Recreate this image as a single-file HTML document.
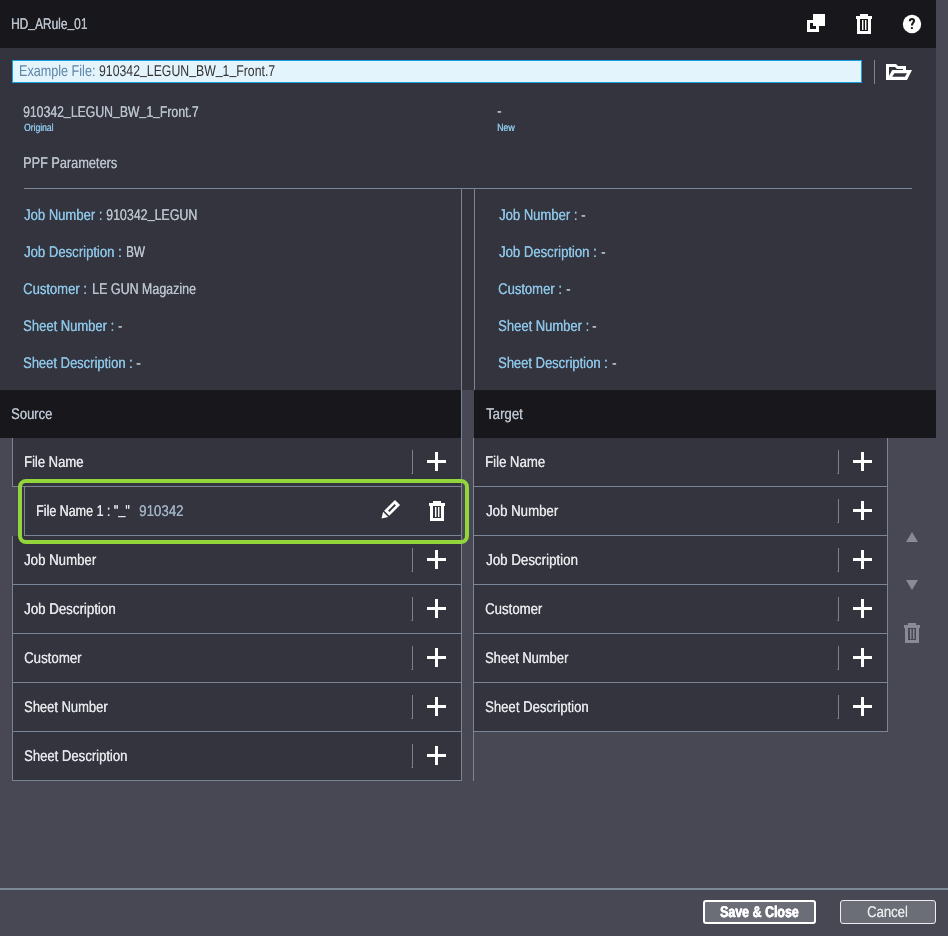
<!DOCTYPE html>
<html><head><meta charset="utf-8">
<style>
*{box-sizing:border-box;margin:0;padding:0}
html,body{width:948px;height:936px;overflow:hidden;background:#474853;font-family:"Liberation Sans",sans-serif}
.a{position:absolute}
.t{position:absolute;white-space:pre;font-size:15.5px;line-height:15px;transform-origin:0 0;text-rendering:geometricPrecision;backface-visibility:hidden;text-shadow:0.3px 0 0 currentColor}
.us{position:relative;top:-2px}
.ln{position:absolute;background:#7a8494}
.sep{position:absolute;width:1px;height:24px;background:#778190}
.sep:after{content:"";position:absolute;left:-1px;bottom:0;width:1px;height:1px;background:#5a6270}
.plus{position:absolute;width:19px;height:19px}
.plus:before{content:"";position:absolute;left:0;top:8px;width:19px;height:3px;background:#fff}
.plus:after{content:"";position:absolute;left:8px;top:0;width:3px;height:19px;background:#fff}
.rowbg{position:absolute;background:#33343d}
</style></head><body>
<svg width="0" height="0" style="position:absolute">
  <defs>
    <symbol id="trash" viewBox="0 0 16 20">
      <path fill-rule="evenodd" d="M4 0h8v2h4v3h-1v15h-14v-15h-1v-3h4z M4 5v12h8v-12z"/>
      <rect x="6" y="6" width="1.4" height="10"/>
      <rect x="9" y="6" width="1.4" height="10"/>
    </symbol>
  </defs>
</svg>
<!-- header -->
<div class="a" style="left:0;top:0;width:936px;height:48px;background:#18171c"></div>
<svg class="a" style="left:807px;top:14px" width="18" height="18" viewBox="807 14 18 18">
  <path fill="#fff" fill-rule="evenodd" d="M807 20h12v12h-12z M810 23v6h6v-6z"/>
  <rect x="813" y="14" width="12" height="12" fill="#fff"/>
</svg>
<svg class="a" style="left:856px;top:14px;fill:#fff" width="16" height="20"><use href="#trash"/></svg>
<svg class="a" style="left:900px;top:12px" width="24" height="24" viewBox="900 12 24 24">
  <circle cx="912" cy="24" r="9.2" fill="#fff"/>
  <path d="M909.85 21.2C909.85 19.8 910.8 18.95 911.95 18.95C913.1 18.95 914 19.8 914 20.9C914 22.6 911.9 22.9 911.9 25.6" fill="none" stroke="#18171c" stroke-width="2.1"/>
  <rect x="910.9" y="27.2" width="2" height="1.8" fill="#18171c"/>
</svg>
<!-- panel -->
<div class="a" style="left:0;top:48px;width:936px;height:342px;background:#33343d"></div>
<div class="a" style="left:12px;top:60px;width:850px;height:23px;background:#e3f4fc;border:1px solid #17a0e6"></div>
<div class="ln" style="left:874px;top:60px;width:1px;height:24px"></div>
<svg class="a" style="left:884px;top:62px" width="30" height="20" viewBox="884 62 30 20">
  <path fill="#fff" fill-rule="evenodd" d="M886 64h10l2 2h8v4h6l-5 10h-21z M889 67v9l3.2-6h10.8v-1h-6l-2-2z M894.4 73.3h12.6l-2.1 3.4h-12.7z"/>
</svg>
<div class="ln" style="left:24px;top:188px;width:888px;height:1px"></div>
<div class="ln" style="left:461px;top:188px;width:1px;height:592px"></div>
<div class="ln" style="left:474px;top:188px;width:1px;height:202px"></div>

<!-- bars -->
<div class="a" style="left:0;top:390px;width:461px;height:48px;background:#18171c"></div>
<div class="a" style="left:474px;top:390px;width:462px;height:48px;background:#18171c"></div>

<!-- left list -->
<div class="rowbg" style="left:12px;top:438px;width:450px;height:343px"></div>
<div class="a" style="left:12px;top:487px;width:6px;height:49px;background:#474853"></div>
<div class="ln" style="left:12px;top:438px;width:1px;height:49px"></div>
<div class="ln" style="left:12px;top:486px;width:450px;height:1px"></div>
<div class="ln" style="left:24px;top:486px;width:1px;height:50px"></div>
<div class="ln" style="left:24px;top:535px;width:438px;height:1px"></div>
<div class="ln" style="left:12px;top:536px;width:1px;height:245px"></div>
<div class="ln" style="left:12px;top:584px;width:450px;height:1px"></div>
<div class="ln" style="left:12px;top:633px;width:450px;height:1px"></div>
<div class="ln" style="left:12px;top:682px;width:450px;height:1px"></div>
<div class="ln" style="left:12px;top:731px;width:450px;height:1px"></div>
<div class="ln" style="left:12px;top:780px;width:450px;height:1px"></div>
<div class="ln" style="left:461px;top:438px;width:1px;height:343px"></div>

<div class="sep" style="left:412px;top:450px"></div><div class="plus" style="left:427px;top:452px"></div>
<svg class="a" style="left:374px;top:494px" width="32" height="32" viewBox="374 494 32 32">
  <g transform="translate(392 508) rotate(-45)" fill="#fff">
    <path fill-rule="evenodd" d="M-7.5 -3.6h15.3v7.2h-15.3z M-4.6 -0.9v1.8h9.2v-1.8z"/>
    <path d="M-9 -3.6v7.2l-5.8 -3.6z"/>
  </g>
</svg>
<svg class="a" style="left:429px;top:501px;fill:#fff" width="16" height="20"><use href="#trash"/></svg>
<div class="sep" style="left:412px;top:548px"></div><div class="plus" style="left:427px;top:550px"></div>
<div class="sep" style="left:412px;top:597px"></div><div class="plus" style="left:427px;top:599px"></div>
<div class="sep" style="left:412px;top:646px"></div><div class="plus" style="left:427px;top:648px"></div>
<div class="sep" style="left:412px;top:695px"></div><div class="plus" style="left:427px;top:697px"></div>
<div class="sep" style="left:412px;top:744px"></div><div class="plus" style="left:427px;top:746px"></div>

<!-- green highlight -->
<div class="a" style="left:18px;top:479px;width:451px;height:65px;border:4px solid #92d63c;border-radius:8px"></div>

<!-- right list -->
<div class="rowbg" style="left:473px;top:438px;width:415px;height:294px"></div>
<div class="ln" style="left:473px;top:438px;width:1px;height:343px"></div>
<div class="ln" style="left:887px;top:438px;width:1px;height:294px"></div>
<div class="ln" style="left:473px;top:486px;width:415px;height:1px"></div>
<div class="ln" style="left:473px;top:535px;width:415px;height:1px"></div>
<div class="ln" style="left:473px;top:584px;width:415px;height:1px"></div>
<div class="ln" style="left:473px;top:633px;width:415px;height:1px"></div>
<div class="ln" style="left:473px;top:682px;width:415px;height:1px"></div>
<div class="ln" style="left:473px;top:731px;width:415px;height:1px"></div>

<div class="sep" style="left:838px;top:450px"></div><div class="plus" style="left:853px;top:452px"></div>
<div class="sep" style="left:838px;top:499px"></div><div class="plus" style="left:853px;top:501px"></div>
<div class="sep" style="left:838px;top:548px"></div><div class="plus" style="left:853px;top:550px"></div>
<div class="sep" style="left:838px;top:597px"></div><div class="plus" style="left:853px;top:599px"></div>
<div class="sep" style="left:838px;top:646px"></div><div class="plus" style="left:853px;top:648px"></div>
<div class="sep" style="left:838px;top:695px"></div><div class="plus" style="left:853px;top:697px"></div>

<!-- side controls -->
<svg class="a" style="left:900px;top:528px" width="24" height="66" viewBox="900 528 24 66">
  <path d="M912 532l6 10h-12z" fill="#888a94"/>
  <path d="M906 580h12l-6 10z" fill="#888a94"/>
</svg>
<svg class="a" style="left:904px;top:623px;fill:#888a94" width="16" height="20"><use href="#trash"/></svg>

<!-- footer -->
<div class="a" style="left:0;top:888px;width:948px;height:2px;background:#7b8794"></div>
<div class="a" style="left:703px;top:900px;width:113px;height:24px;background:#6b6d77;border:2px solid #fff;border-radius:3px"></div>
<div class="a" style="left:840px;top:900px;width:96px;height:24px;background:#6b6d77;border:1px solid #ececee;border-radius:3px"></div>
<div class="t" style="left:11.03px;top:17px;color:#b8c1cb;transform:scaleX(0.7704);">HD<span class="us">_</span>ARule<span class="us">_</span>01</div>
<div class="t" style="left:18.59px;top:64px;color:#5f84a8;transform:scaleX(0.8141);text-shadow:none">Example File:</div>
<div class="t" style="left:98.71px;top:64px;color:#333333;transform:scaleX(0.7923);text-shadow:none">910342<span class="us">_</span>LEGUN<span class="us">_</span>BW<span class="us">_</span>1<span class="us">_</span>Front.7</div>
<div class="t" style="left:23.21px;top:105px;color:#b8c1cb;transform:scaleX(0.7896);">910342<span class="us">_</span>LEGUN<span class="us">_</span>BW<span class="us">_</span>1<span class="us">_</span>Front.7</div>
<div class="t" style="left:24.00px;top:123px;color:#8cc3e5;transform:scaleX(0.8139);font-size:10.5px;line-height:10px;text-shadow:0.25px 0 0 currentColor">Original</div>
<div class="t" style="left:497.12px;top:104px;color:#b8c1cb;transform:scaleX(0.8750);">-</div>
<div class="t" style="left:497.16px;top:123px;color:#8cc3e5;transform:scaleX(0.8400);font-size:10.5px;line-height:10px;text-shadow:0.25px 0 0 currentColor">New</div>
<div class="t" style="left:23.18px;top:156px;color:#b8c1cb;transform:scaleX(0.8212);">PPF Parameters</div>
<div class="t" style="left:24.00px;top:208px;color:#8cc3e5;transform:scaleX(0.8413);">Job Number :</div>
<div class="t" style="left:106.30px;top:208px;color:#b8c1cb;transform:scaleX(0.8027);">910342<span class="us">_</span>LEGUN</div>
<div class="t" style="left:24.00px;top:245px;color:#8cc3e5;transform:scaleX(0.8456);">Job Description :</div>
<div class="t" style="left:126.04px;top:245px;color:#b8c1cb;transform:scaleX(0.7583);">BW</div>
<div class="t" style="left:23.16px;top:282px;color:#8cc3e5;transform:scaleX(0.8419);">Customer :</div>
<div class="t" style="left:91.60px;top:282px;color:#b8c1cb;transform:scaleX(0.8039);">LE GUN Magazine</div>
<div class="t" style="left:23.16px;top:319px;color:#8cc3e5;transform:scaleX(0.8396);">Sheet Number :</div>
<div class="t" style="left:117.50px;top:319px;color:#b8c1cb;transform:scaleX(0.8000);">-</div>
<div class="t" style="left:23.16px;top:356px;color:#8cc3e5;transform:scaleX(0.8372);">Sheet Description :</div>
<div class="t" style="left:136.38px;top:356px;color:#b8c1cb;transform:scaleX(0.9250);">-</div>
<div class="t" style="left:498.70px;top:208px;color:#8cc3e5;transform:scaleX(0.8413);">Job Number :</div>
<div class="t" style="left:581.42px;top:208px;color:#b8c1cb;transform:scaleX(0.8750);">-</div>
<div class="t" style="left:498.70px;top:245px;color:#8cc3e5;transform:scaleX(0.8456);">Job Description :</div>
<div class="t" style="left:600.62px;top:245px;color:#b8c1cb;transform:scaleX(0.8750);">-</div>
<div class="t" style="left:497.86px;top:282px;color:#8cc3e5;transform:scaleX(0.8419);">Customer :</div>
<div class="t" style="left:566.42px;top:282px;color:#b8c1cb;transform:scaleX(0.8750);">-</div>
<div class="t" style="left:497.86px;top:319px;color:#8cc3e5;transform:scaleX(0.8396);">Sheet Number :</div>
<div class="t" style="left:592.33px;top:319px;color:#b8c1cb;transform:scaleX(0.8750);">-</div>
<div class="t" style="left:497.86px;top:356px;color:#8cc3e5;transform:scaleX(0.8372);">Sheet Description :</div>
<div class="t" style="left:611.62px;top:356px;color:#b8c1cb;transform:scaleX(0.8750);">-</div>
<div class="t" style="left:10.66px;top:407px;color:#b8c1cb;transform:scaleX(0.8375);">Source</div>
<div class="t" style="left:485.50px;top:407px;color:#b8c1cb;transform:scaleX(0.8512);">Target</div>
<div class="t" style="left:23.96px;top:455px;color:#e3e6e9;transform:scaleX(0.8406);">File Name</div>
<div class="t" style="left:36.09px;top:504px;color:#e3e6e9;transform:scaleX(0.8061);">File Name 1 : "<span class="us">_</span>"</div>
<div class="t" style="left:138.64px;top:504px;color:#9fb1c4;transform:scaleX(0.8600);">910342</div>
<div class="t" style="left:24.40px;top:553px;color:#e3e6e9;transform:scaleX(0.8536);">Job Number</div>
<div class="t" style="left:24.40px;top:602px;color:#e3e6e9;transform:scaleX(0.8575);">Job Description</div>
<div class="t" style="left:23.54px;top:651px;color:#e3e6e9;transform:scaleX(0.8561);">Customer</div>
<div class="t" style="left:23.56px;top:700px;color:#e3e6e9;transform:scaleX(0.8364);">Sheet Number</div>
<div class="t" style="left:23.56px;top:749px;color:#e3e6e9;transform:scaleX(0.8446);">Sheet Description</div>
<div class="t" style="left:484.75px;top:455px;color:#e3e6e9;transform:scaleX(0.8493);">File Name</div>
<div class="t" style="left:485.60px;top:504px;color:#e3e6e9;transform:scaleX(0.8536);">Job Number</div>
<div class="t" style="left:485.60px;top:553px;color:#e3e6e9;transform:scaleX(0.8594);">Job Description</div>
<div class="t" style="left:484.75px;top:602px;color:#e3e6e9;transform:scaleX(0.8515);">Customer</div>
<div class="t" style="left:484.77px;top:651px;color:#e3e6e9;transform:scaleX(0.8323);">Sheet Number</div>
<div class="t" style="left:484.75px;top:700px;color:#e3e6e9;transform:scaleX(0.8471);">Sheet Description</div>
<div class="t" style="left:719.70px;top:905px;color:#ffffff;transform:scaleX(0.8021);font-weight:700;-webkit-text-stroke:0.5px #fff">Save &amp; Close</div>
<div class="t" style="left:867.45px;top:905px;color:#e6e8ea;transform:scaleX(0.8457);text-shadow:0.2px 0 0 currentColor">Cancel</div>
</body></html>
